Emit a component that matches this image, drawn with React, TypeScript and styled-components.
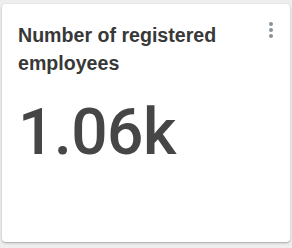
import styled, { createGlobalStyle } from "styled-components";
import { FC } from "react";

const Global = createGlobalStyle`
  html, body {
    margin: 0;
    padding: 0;
    background: #eeeeee;
  }
  body {
    font-family: "Liberation Sans", Arial, sans-serif;
  }
`;

const Page = styled.div`
  width: 292px;
  height: 248px;
  padding: 4px 2px 6px 2px;
  box-sizing: border-box;
`;

const Card = styled.div`
  position: relative;
  height: 100%;
  background: #ffffff;
  border-radius: 4px;
  box-shadow: 0 1px 3px rgba(0, 0, 0, 0.2), 0 1px 1px rgba(0, 0, 0, 0.12);
  padding: 17px 16px 0 16px;
  box-sizing: border-box;
  display: flex;
  flex-direction: column;
`;

const Header = styled.div`
  display: flex;
  align-items: flex-start;
  justify-content: space-between;
`;

const Title = styled.h3`
  margin: 0;
  font-size: 19.6px;
  line-height: 28px;
  font-weight: 700;
  color: #383838;
  max-width: 236px;
`;

const MenuButton = styled.button`
  border: none;
  background: none;
  padding: 0;
  margin: 1px -2px 0 0;
  width: 10px;
  display: flex;
  flex-direction: column;
  align-items: center;
  gap: 2px;
  cursor: pointer;
`;

const Dot = styled.span`
  width: 4px;
  height: 4px;
  border-radius: 50%;
  background: #8a9299;
`;

const Value = styled.div`
  margin-top: 20px;
  font-family: Roboto, "Liberation Sans", sans-serif;
  font-weight: 500;
  font-size: 64px;
  line-height: 72px;
  letter-spacing: -0.5px;
  color: #464646;
`;

const Menu: FC = () => (
  <MenuButton type="button" aria-label="More">
    <Dot />
    <Dot />
    <Dot />
  </MenuButton>
);

const App: FC = () => (
  <>
    <Global />
    <Page>
      <Card>
        <Header>
          <Title>Number of registered employees</Title>
          <Menu />
        </Header>
        <Value>1.06k</Value>
      </Card>
    </Page>
  </>
);

export default App;
